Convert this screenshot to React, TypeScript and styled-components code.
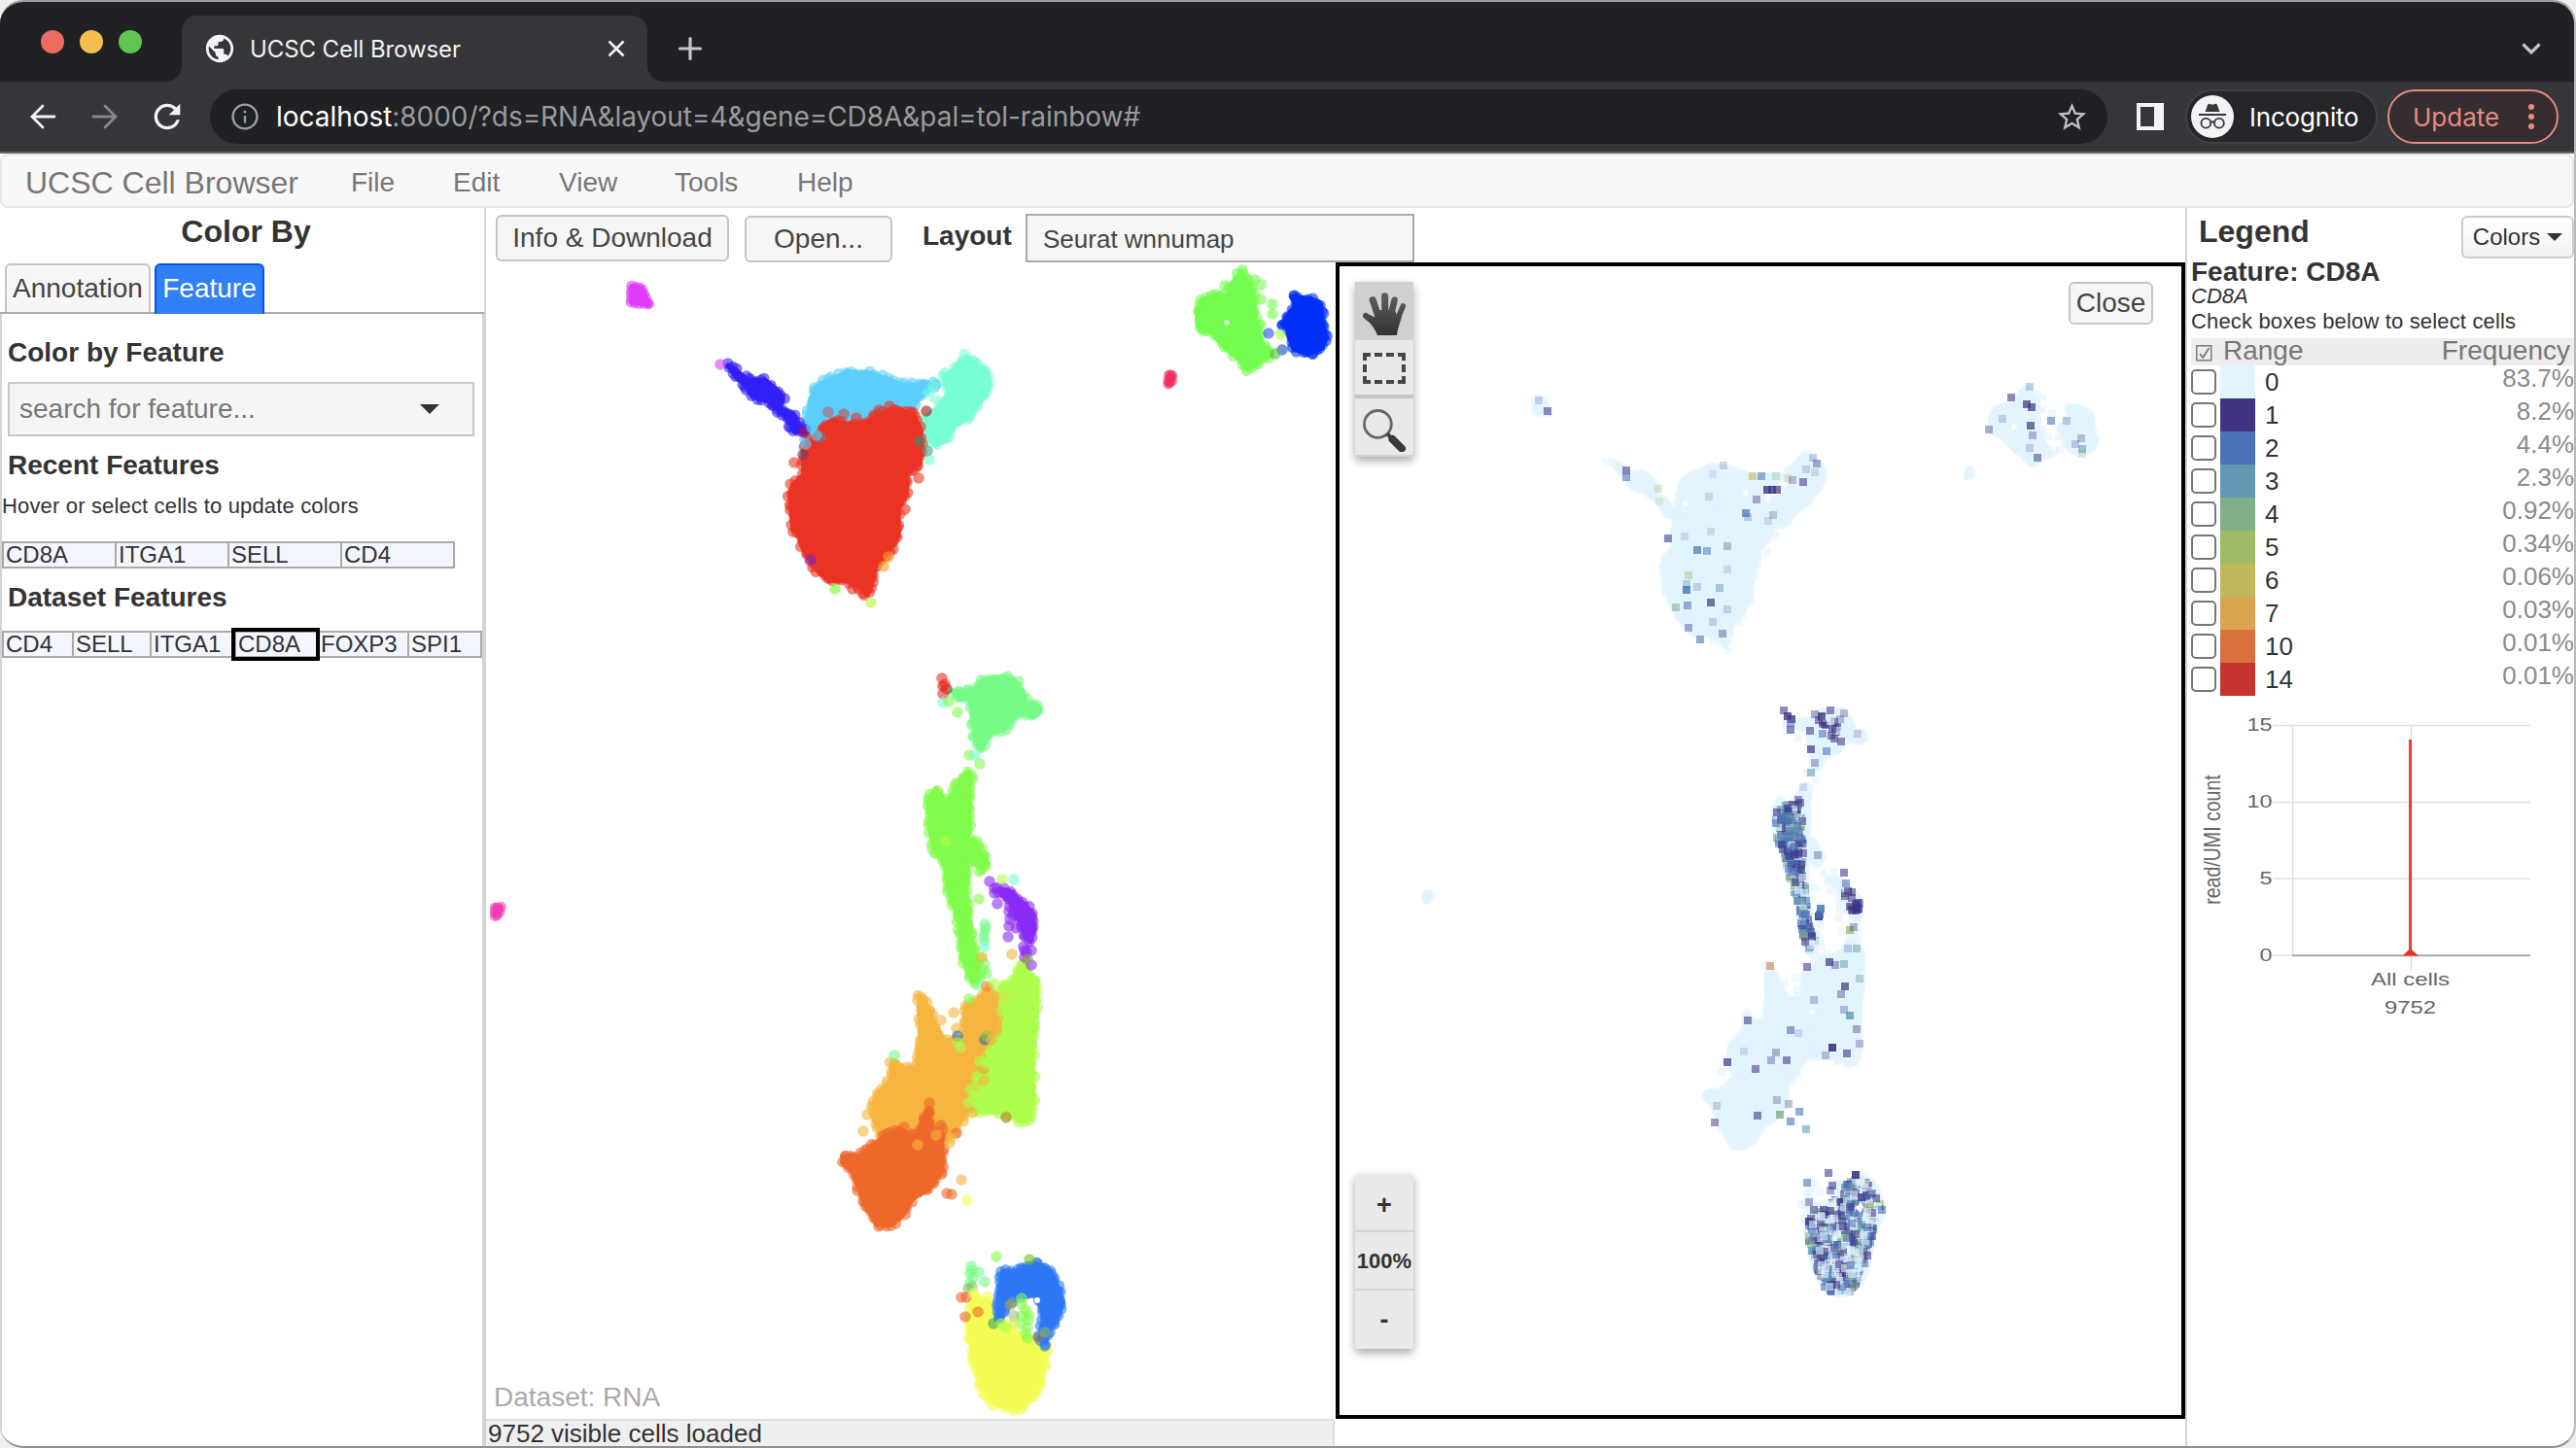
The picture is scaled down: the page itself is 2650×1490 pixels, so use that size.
import React from 'react';
import styled, { createGlobalStyle, css } from 'styled-components';
import { MdPublic, MdRefresh, MdStarBorder } from 'react-icons/md';

const GlobalStyle = createGlobalStyle`
  * { box-sizing: border-box; }
  html, body { margin: 0; padding: 0; background: #efefef; }
  body { font-family: "Liberation Sans", Arial, sans-serif; color: #333; overflow: hidden; }
`;

/* ---------- window chrome ---------- */

const Window = styled.div`
  width: 2650px;
  height: 1490px;
  display: flex;
  flex-direction: column;
  background: #fff;
  border: 2px solid #9b9d9f;
  border-left: 0;
  border-right-color: #b9b9b9;
  border-bottom-color: #8f8f8f;
  border-radius: 24px;
  overflow: hidden;
`;

const uiFont = css`
  font-family: Inter, Roboto, sans-serif;
  white-space: nowrap;
`;

const TabStrip = styled.div`
  height: 82px;
  flex: none;
  display: flex;
  align-items: flex-end;
  background: #202124;
  padding-left: 42px;
`;

const Lights = styled.div`
  display: flex;
  gap: 16px;
  width: 145px;
  align-self: flex-start;
  padding-top: 29px;
`;

const Light = styled.span<{ $color: string }>`
  width: 24px;
  height: 24px;
  border-radius: 50%;
  background: ${(p) => p.$color};
`;

const Tab = styled.div`
  position: relative;
  width: 479px;
  height: 68px;
  border-radius: 16px 16px 0 0;
  background: #35363a;
  display: flex;
  align-items: center;
  padding: 0 23px 0 22px;
  color: #f1f3f4;
  &::before, &::after {
    content: "";
    position: absolute;
    bottom: 0;
    width: 16px;
    height: 16px;
  }
  &::before { left: -16px; background: radial-gradient(circle at 0 0, transparent 15.5px, #35363a 16px); }
  &::after { right: -16px; background: radial-gradient(circle at 100% 0, transparent 15.5px, #35363a 16px); }
`;

const TabTitle = styled.span`
  ${uiFont}
  flex: 1;
  margin-left: 14px;
  font-size: 24px;
  letter-spacing: -0.1px;
`;

const NewTab = styled.div`
  height: 68px;
  display: flex;
  align-items: center;
  margin-left: 31px;
  flex: 1;
`;

const TabMenu = styled.div`
  height: 68px;
  display: flex;
  align-items: center;
  padding-right: 34px;
`;

const Toolbar = styled.div`
  height: 74px;
  flex: none;
  display: flex;
  align-items: center;
  background: #35363a;
  border-bottom: 2px solid #646569;
  padding: 0 16px 0 30px;
`;

const NavIcons = styled.div`
  width: 186px;
  display: flex;
  align-items: center;
  gap: 36px;
  & > :last-child { margin-left: -6px; }
`;

const Omnibox = styled.div`
  width: 1952px;
  height: 56px;
  border-radius: 28px;
  background: #202124;
  display: flex;
  align-items: center;
  padding: 0 19px 0 22px;
`;

const Url = styled.span`
  ${uiFont}
  flex: 1;
  margin-left: 18px;
  font-size: 28px;
  letter-spacing: -0.04px;
  color: #9a9b9e;
  b { font-weight: 400; color: #fff; }
`;

const SidePanelIcon = styled.div`
  width: 28px;
  height: 28px;
  margin-left: 30px;
  border: 4px solid #f1f3f4;
  border-right-width: 10px;
`;

const IncognitoPill = styled.div`
  ${uiFont}
  width: 198px;
  height: 56px;
  margin-left: 22px;
  border: 2px solid #404145;
  border-radius: 28px;
  background: #25252a;
  display: flex;
  align-items: center;
  padding-left: 4px;
  gap: 16px;
  color: #fff;
  font-size: 26px;
  letter-spacing: -0.2px;
`;

const UpdatePill = styled.div`
  ${uiFont}
  width: 176px;
  height: 56px;
  margin-left: 10px;
  border: 2px solid #e58b80;
  border-radius: 28px;
  background: #352d30;
  display: flex;
  align-items: center;
  justify-content: space-between;
  padding: 0 23px 0 24px;
  color: #e58b80;
  font-size: 26px;
  letter-spacing: 0;
`;

/* ---------- page ---------- */

const Menu = styled.nav`
  height: 56px;
  flex: none;
  display: flex;
  background: #f8f8f8;
  border: 2px solid #e7e7e7;
  border-radius: 8px;
  padding-left: 24px;
  color: #777;
  font-size: 28px;
  line-height: 55px;
`;

const Brand = styled.span`
  font-size: 32px;
  width: 335px;
  line-height: 56px;
`;

const MenuItem = styled.span<{ $w: number }>`
  width: ${(p) => p.$w}px;
`;

const Body = styled.div`
  flex: 1;
  display: flex;
  min-height: 0;
`;

const LeftPanel = styled.aside`
  width: 500px;
  flex: none;
  display: flex;
  flex-direction: column;
  border-right: 2px solid #d4d4d4;
`;

const PanelTitle = styled.h2`
  margin: 0;
  font-size: 32px;
  line-height: 48px;
  height: 57px;
  padding-left: 8px;
  text-align: center;
`;

const Tabs = styled.div`
  display: flex;
  gap: 4px;
  height: 52px;
  padding-left: 5px;
  border-bottom: 2px solid #aaa;
`;

const PanelTab = styled.div<{ $active?: boolean }>`
  height: ${(p) => (p.$active ? 52 : 50)}px;
  width: ${(p) => (p.$active ? 113 : 150)}px;
  border: 2px solid ${(p) => (p.$active ? '#0a4dfa' : '#c5c5c5')};
  border-bottom: 0;
  border-radius: 6px 6px 0 0;
  background: ${(p) => (p.$active ? '#3080f8' : '#f6f6f6')};
  color: ${(p) => (p.$active ? '#fff' : '#454545')};
  font-size: 28px;
  line-height: 47px;
  text-align: center;
`;

const TabBody = styled.div`
  flex: 1;
  border-left: 2px solid #d4d4d4;
  border-right: 2px solid #d4d4d4;
  padding-top: 24px;
`;

const SectionTitle = styled.h3<{ $h: number; $top?: number }>`
  margin: 0;
  padding: ${(p) => p.$top ?? 0}px 0 0 6px;
  font-size: 28px;
  line-height: 32px;
  height: ${(p) => p.$h}px;
`;

const SearchBox = styled.div`
  width: 480px;
  height: 56px;
  margin: 0 0 14px 6px;
  padding: 0 34px 0 10px;
  border: 2px solid #c8c8c8;
  background: #f5f5f5;
  display: flex;
  align-items: center;
  justify-content: space-between;
  color: #777;
  font-size: 28px;
  line-height: 52px;
`;

const Caret = styled.span<{ $w: number; $h: number }>`
  border-left: ${(p) => p.$w / 2}px solid transparent;
  border-right: ${(p) => p.$w / 2}px solid transparent;
  border-top: ${(p) => p.$h}px solid #333;
`;

const Hint = styled.p<{ $h: number }>`
  margin: 0;
  font-size: 22px;
  letter-spacing: 0.16px;
  line-height: 26px;
  height: ${(p) => p.$h}px;
  white-space: nowrap;
`;

const GeneTable = styled.div`
  display: flex;
  height: 28px;
  width: max-content;
  border-right: 2px solid #a9a9a9;
`;

const GeneCell = styled.div<{ $w: number; $selected?: boolean }>`
  width: ${(p) => p.$w}px;
  height: 28px;
  padding-left: 2px;
  border: 2px solid #a9a9a9;
  border-right: 0;
  background: #f4f6ff;
  font-size: 24px;
  line-height: 24px;
  white-space: nowrap;
  ${(p) =>
    p.$selected &&
    css`
      position: relative;
      outline: 4px solid #000;
      outline-offset: -1px;
    `}
`;

const Center = styled.main`
  width: 1748px;
  flex: none;
  display: flex;
  flex-direction: column;
`;

const ControlBar = styled.div`
  height: 56px;
  flex: none;
  display: flex;
  align-items: flex-start;
  padding-left: 10px;
`;

const Button = styled.button<{ $w: number; $h?: number; $top?: number; $left?: number }>`
  width: ${(p) => p.$w}px;
  height: ${(p) => p.$h ?? 48}px;
  margin: ${(p) => p.$top ?? 0}px 0 0 ${(p) => p.$left ?? 0}px;
  padding: 0;
  border: 2px solid #c5c5c5;
  border-radius: 6px;
  background: #f6f6f6;
  color: #454545;
  font: 28px/${(p) => (p.$h ?? 48) - 6}px "Liberation Sans", Arial, sans-serif;
  white-space: nowrap;
`;

const LayoutLabel = styled.b`
  font-size: 28px;
  line-height: 32px;
  margin: 13px 0 0 31px;
  width: 106px;
`;

const Select = styled.div`
  width: 400px;
  height: 50px;
  margin-top: 6px;
  padding-left: 16px;
  border: 2px solid #aaa;
  background: #f6f6f6;
  color: #454545;
  font-size: 26px;
  line-height: 48px;
`;

const Plots = styled.div`
  display: flex;
  height: 1190px;
  flex: none;
`;

const PlotLeft = styled.div`
  width: 874px;
  position: relative;
`;

const DatasetTag = styled.div`
  position: absolute;
  left: 8px;
  bottom: 6px;
  font-size: 28px;
  line-height: 32px;
  color: #aaa;
`;

const PlotRight = styled.div`
  width: 874px;
  position: relative;
  border: 4px solid #000;
`;

const FullSvg = styled.svg`
  display: block;
`;

const ToolStack = styled.div<{ $top: number }>`
  position: absolute;
  left: 16px;
  top: ${(p) => p.$top}px;
  width: 60px;
  height: 180px;
  display: flex;
  flex-direction: column;
  background: #e9e9e9;
  box-shadow: 0 4px 10px rgba(0, 0, 0, 0.35);
  border-radius: 2px;
`;

const Tool = styled.div<{ $h: number; $active?: boolean; $line?: string; $drop?: number }>`
  height: ${(p) => p.$h}px;
  padding-top: ${(p) => p.$drop ?? 0}px;
  display: flex;
  align-items: center;
  justify-content: center;
  background: ${(p) => (p.$active ? '#d0d0d0' : 'transparent')};
  border-bottom: ${(p) => p.$line ?? '0'};
  font-weight: bold;
  font-size: 22px;
`;

const Sign = styled.span`
  font-size: 27px;
`;

const ClosePlace = styled.div`
  position: absolute;
  right: 29px;
  top: 16px;
`;

const StatusRow = styled.div`
  flex: 1;
  display: flex;
`;

const Status = styled.div`
  width: 873px;
  background: #efefef;
  border-top: 2px solid #dcdcdc;
  border-right: 2px solid #dcdcdc;
  padding-left: 2px;
  font-size: 26px;
  line-height: 26px;
`;

const Legend = styled.aside`
  flex: 1;
  border-left: 2px solid #d4d4d4;
  padding-left: 4px;
`;

const LegendHead = styled.div`
  display: flex;
  justify-content: space-between;
  height: 58px;
`;

const LegendTitle = styled.h2`
  margin: 0;
  padding-left: 8px;
  font-size: 32px;
  line-height: 48px;
`;

const ColorsButton = styled.div`
  width: 116px;
  height: 44px;
  margin-top: 8px;
  border: 2px solid #ccc;
  border-radius: 6px;
  background: linear-gradient(#fff, #f2f2f2);
  display: flex;
  align-items: center;
  justify-content: center;
  gap: 7px;
  font-size: 24px;
  line-height: 38px;
`;

const FeatureName = styled.h3`
  margin: -8px 0 0;
  font-size: 28px;
  line-height: 32px;
  height: 26px;
`;

const FeatureId = styled.i`
  display: block;
  font-size: 22px;
  line-height: 26px;
  height: 28px;
  padding-top: 2px;
`;

const LegendColumns = styled.div`
  height: 28px;
  display: flex;
  background: #ededed;
  color: #777;
  font-size: 28px;
  line-height: 26px;
  padding: 0 4px 0 5px;
`;

const ColumnName = styled.span<{ $grow?: boolean }>`
  flex: ${(p) => (p.$grow ? 1 : 'none')};
`;

const CheckGlyph = styled.span`
  width: 28px;
  padding-top: 7px;
  display: flex;
`;

const LegendRow = styled.div`
  display: flex;
  height: 34px;
`;

const CheckBox = styled.span`
  width: 26px;
  height: 26px;
  margin: 4px 4px 0 0;
  border: 2px solid #767676;
  border-radius: 5px;
  background: #fff;
`;

const Swatch = styled.span<{ $color: string }>`
  width: 36px;
  background: ${(p) => p.$color};
`;

const RowLabel = styled.span`
  flex: 1;
  margin-left: 10px;
  font-size: 26px;
  line-height: 34px;
`;

const RowFreq = styled.span`
  font-size: 26px;
  line-height: 26px;
  color: #8b8b8b;
`;

/* ---------- scatter data ---------- */

type Pt = [number, number];

const LIME = '#aefd4c';
const MINT = '#78fa88';
const GREEN = '#82fc4c';
const AMBER = '#f5b540';
const RUST = '#ee682c';
const RED = '#ea3324';
const VIOLET = '#8a2bf5';
const BLUE = '#2e78f6';
const YELLOW = '#f4fd55';
const AQUA = '#78fdd6';
const SKY = '#5ccefb';

const clusters: { color: string; path: string; tight?: boolean }[] = [
  { color: '#e03cf8', tight: true, path: '645,293 654,290 664,294 669,304 672,312 669,318 656,317 645,313' },
  { color: '#f0315f', tight: true, path: '1198,384 1205,381 1210,385 1210,394 1204,399 1197,397' },
  { color: '#74fd50', path: '1277,275 1285,283 1294,297 1295,323 1302,350 1312,363 1308,371 1298,374 1293,380 1281,384 1271,373 1256,360 1245,347 1228,338 1227,317 1234,304 1252,299 1262,300 1262,293 1268,283' },
  { color: '#0030f8', path: '1325,303 1336,301 1351,303 1363,312 1365,330 1369,348 1363,362 1345,369 1328,363 1322,350 1320,340 1314,333 1321,322 1328,313' },
  { color: SKY, path: '826,430 829,413 834,397 849,387 872,378 895,379 918,387 932,393 949,389 964,390 966,398 949,413 940,424 903,435 880,445 852,445 834,449 833,461 824,461' },
  { color: '#3220f5', path: '745,373 760,377 771,387 788,386 802,397 810,407 806,417 820,423 825,433 833,443 829,450 814,448 806,433 794,423 788,417 772,413 763,400 751,387' },
  { color: AQUA, path: '996,362 1009,372 1019,380 1023,397 1015,413 998,433 984,443 975,457 961,463 950,453 947,427 966,413 971,403 966,387 978,377 988,365' },
  { color: RED, path: '923,416 943,423 951,440 954,465 949,480 938,490 937,510 929,523 929,553 918,570 904,587 902,600 896,615 889,616 880,607 869,602 851,602 834,587 820,563 817,550 811,547 808,513 811,497 822,487 822,463 831,450 848,432 856,428 872,432 888,431 898,425 908,420' },
  { color: '#ee3cb0', tight: true, path: '505,932 511,929 519,930 519,939 514,946 505,945' },
  { color: MINT, path: '1025,692 1045,694 1056,709 1059,721 1071,722 1075,734 1065,742 1048,738 1037,754 1022,758 1011,776 999,766 997,748 994,722 982,722 977,708 999,706 1008,696' },
  { color: GREEN, path: '995,789 1004,796 1002,814 1002,848 1000,861 1008,863 1021,887 1011,900 1000,886 999,921 1004,963 1010,994 1010,1010 997,1014 985,984 981,947 972,921 967,890 956,874 951,848 950,827 955,814 964,807 975,822 978,809 986,798' },
  { color: VIOLET, path: '1022,914 1040,912 1054,924 1067,938 1069,955 1063,973 1051,968 1045,950 1034,930' },
  { color: LIME, path: '1048,989 1060,994 1071,1010 1071,1047 1067,1088 1068,1130 1063,1154 1048,1159 1040,1149 1014,1149 999,1146 991,1120 1012,1078 1022,1036 1024,1015 1040,1005' },
  { color: AMBER, path: '943,1020 955,1026 965,1049 974,1067 988,1070 988,1036 1002,1026 1017,1013 1028,1026 1031,1057 1014,1083 1004,1105 997,1120 1002,1141 985,1167 968,1177 905,1177 893,1146 896,1125 913,1109 913,1091 922,1088 931,1096 939,1096 942,1067 941,1031' },
  { color: RUST, path: '870,1185 882,1185 902,1169 919,1160 939,1165 951,1141 959,1141 962,1160 974,1170 974,1206 959,1227 942,1237 933,1253 919,1265 899,1264 885,1240 873,1209 862,1198 863,1189' },
  { color: YELLOW, path: '991,1358 999,1332 1020,1336 1031,1355 1048,1370 1068,1376 1082,1388 1077,1418 1068,1439 1051,1453 1040,1455 1017,1447 1005,1428 997,1402' },
  { color: BLUE, path: '1045,1303 1065,1295 1083,1303 1091,1318 1098,1339 1094,1355 1083,1373 1077,1386 1065,1379 1069,1355 1063,1336 1048,1340 1037,1347 1031,1363 1022,1355 1022,1332 1028,1305' },
];

const singles: [number, number, string][] = [
  [1291, 288, '#74fd50'], [1297, 293, '#74fd50'], [1260, 294, '#74fd50'], [1309, 313, '#74fd50'], [1309, 323, '#74fd50'],
  [1305, 343, '#3048f8'], [1317, 344, LIME], [1319, 360, '#1548c8'], [1312, 364, '#50c040'], [1297, 308, '#74fd50'], [1297, 334, '#74fd50'],
  [741, 375, '#d845f0'], [955, 403, AQUA], [956, 473, AQUA], [951, 396, SKY], [960, 397, AQUA], [962, 410, AQUA],
  [817, 476, RED], [945, 492, RED], [931, 524, RED], [877, 606, RED], [826, 468, '#704060'], [844, 450, '#708090'],
  [834, 576, '#8020c0'], [953, 423, '#a01a10'], [946, 454, '#2f8f70'], [827, 445, '#c0104a'], [954, 464, '#50a080'],
  [835, 440, SKY], [840, 448, SKY], [829, 457, SKY], [852, 424, '#b0606c'], [881, 430, RED], [868, 426, '#c05048'], [915, 418, RED], [904, 422, '#d04038'], [936, 424, RED],
  [859, 606, '#7dfd30'], [896, 620, '#b8f83c'], [909, 583, '#f5a020'], [914, 573, '#f5a020'],
  [969, 698, RED], [970, 706, '#e01818'], [974, 709, '#a02018'], [972, 704, RED], [970, 714, RED], [970, 723, AQUA], [976, 722, GREEN], [985, 733, GREEN],
  [997, 777, GREEN], [1003, 777, AQUA], [1008, 786, GREEN], [1007, 897, GREEN], [1007, 925, GREEN], [973, 866, '#b0fc40'],
  [1013, 951, MINT], [1014, 955, MINT], [1013, 959, MINT], [1012, 964, MINT], [1013, 968, MINT], [1013, 974, AQUA], [1013, 992, MINT], [1015, 1002, MINT], [1006, 1014, MINT], [1010, 986, GREEN], [1012, 998, GREEN],
  [1018, 907, VIOLET], [1023, 919, VIOLET], [1026, 930, VIOLET], [1023, 914, VIOLET], [1038, 938, VIOLET], [1039, 946, VIOLET], [1042, 942, VIOLET], [1045, 955, VIOLET], [1038, 953, VIOLET], [1037, 964, VIOLET], [1056, 980, VIOLET], [1054, 978, VIOLET], [1061, 978, VIOLET], [1061, 993, VIOLET], [1054, 985, VIOLET], [1053, 974, VIOLET],
  [1031, 905, LIME], [1043, 905, AQUA], [1041, 982, AMBER], [1057, 987, '#90a040'],
  [920, 1086, MINT], [888, 1164, AMBER], [892, 1147, AMBER], [981, 1042, AMBER], [984, 1058, AMBER], [968, 1050, AMBER], [989, 1214, AMBER], [995, 1235, YELLOW],
  [974, 1228, RUST], [979, 1229, RUST], [984, 1166, RUST], [985, 1066, '#2f70a0'], [1013, 1070, '#2f70a0'], [1015, 1066, '#90c040'], [988, 1078, LIME], [985, 1073, LIME],
  [997, 1028, GREEN], [1015, 1015, '#f08030'], [1010, 985, AMBER], [1005, 1108, LIME], [998, 1121, LIME], [996, 1135, LIME], [1012, 1100, '#f0a040'], [1016, 1095, LIME], [1022, 1012, LIME], [1035, 1149, '#b0d040'], [1035, 1150, '#b09030'],
  [1007, 1128, LIME], [1001, 1131, LIME], [1003, 1118, '#d8d848'], [1008, 1092, LIME], [1028, 1078, LIME], [1020, 1070, '#e8c044'], [1030, 1040, LIME], [1033, 1026, '#d8e048'], [1000, 1145, AMBER], [1012, 1112, AMBER],
  [944, 1178, AMBER], [978, 1171, AMBER], [968, 1158, RUST], [977, 1176, AMBER], [930, 1160, RUST], [926, 1164, RUST], [956, 1135, RUST], [955, 1146, RUST], [970, 1162, RUST], [963, 1168, AMBER],
  [999, 1303, MINT], [1000, 1307, MINT], [998, 1311, MINT], [1001, 1315, MINT], [1007, 1309, MINT], [1013, 1319, MINT], [998, 1320, MINT], [1000, 1324, '#80d070'], [996, 1326, '#80c060'], [1025, 1293, GREEN], [1059, 1296, '#70c020'],
  [989, 1335, RUST], [994, 1335, RUST], [1006, 1350, RUST], [993, 1355, RUST], [1005, 1338, YELLOW], [1016, 1334, YELLOW], [1002, 1331, YELLOW],
  [1040, 1326, BLUE], [1050, 1330, BLUE], [1033, 1350, BLUE], [1042, 1340, '#70a0a0'],
  [1051, 1336, GREEN], [1051, 1342, GREEN], [1055, 1348, GREEN], [1058, 1353, GREEN], [1058, 1358, GREEN], [1051, 1354, GREEN], [1050, 1362, GREEN], [1057, 1366, GREEN], [1057, 1377, GREEN], [1055, 1372, GREEN], [1043, 1354, '#a0c080'], [1043, 1362, '#d0f060'], [1022, 1362, '#30a060'], [1034, 1366, LIME], [1044, 1372, YELLOW], [1039, 1343, '#a0a050'], [1030, 1362, LIME], [1068, 1376, '#808060'], [1075, 1371, '#90b060'], [1075, 1385, BLUE],
];

const mulberry = (seed: number) => () => {
  seed = (seed + 0x6d2b79f5) | 0;
  let t = Math.imul(seed ^ (seed >>> 15), 1 | seed);
  t = (t + Math.imul(t ^ (t >>> 7), 61 | t)) ^ t;
  return ((t ^ (t >>> 14)) >>> 0) / 4294967296;
};

const parse = (s: string): Pt[] => s.split(' ').map((p) => p.split(',').map(Number) as Pt);

const area = (pts: Pt[]) =>
  pts.reduce((sum, [x, y], i) => {
    const [nx, ny] = pts[(i + 1) % pts.length];
    return sum + (x * ny - nx * y);
  }, 0) / 2;

/* Pulls the outline inwards so the dots drawn on it end at the cluster's edge. */
const inset = (pts: Pt[], d: number): Pt[] => {
  const sign = area(pts) > 0 ? 1 : -1;
  return pts.map(([x, y], i) => {
    const a = pts[(i + pts.length - 1) % pts.length];
    const b = pts[(i + 1) % pts.length];
    const dx = b[0] - a[0];
    const dy = b[1] - a[1];
    const len = Math.hypot(dx, dy) || 1;
    return [x - (sign * dy * d) / len, y + (sign * dx * d) / len];
  });
};

const edgeDots = (pts: Pt[], seed: number, jitter: number): Pt[] => {
  const rnd = mulberry(seed);
  const dots: Pt[] = [];
  pts.forEach(([x, y], i) => {
    const [nx, ny] = pts[(i + 1) % pts.length];
    const n = Math.max(1, Math.round(Math.hypot(nx - x, ny - y) / 4.5));
    for (let k = 0; k < n; k++) {
      const t = k / n;
      dots.push([x + (nx - x) * t + (rnd() - 0.5) * jitter, y + (ny - y) * t + (rnd() - 0.5) * jitter]);
    }
  });
  return dots;
};

const Cluster = ({ path, color, seed, tight }: { path: string; color: string; seed: number; tight?: boolean }) => {
  const core = inset(parse(path), 5);
  return (
    <g fill={color}>
      <polygon points={core.map((p) => p.join(',')).join(' ')} stroke={color} strokeWidth={5} strokeLinejoin="round" />
      {edgeDots(core, seed, tight ? 1 : 5).map(([x, y], i) => (
        <circle key={i} cx={x} cy={y} r={5.6} opacity={0.6} />
      ))}
    </g>
  );
};

const AnnotationPlot = () => (
  <FullSvg width="874" height="1190" viewBox="500 270 874 1190">
    {clusters.map((c, i) => (
      <Cluster key={i} {...c} seed={i + 1} />
    ))}
    {singles.map(([x, y, color], i) => (
      <circle key={i} cx={x} cy={y} r={5.8} fill={color} opacity={0.6} />
    ))}
    <g fill="#fff">
      <circle cx="1262" cy="332" r="2.5" />
      <circle cx="1067" cy="1338" r="3" />
      <circle cx="963" cy="406" r="2" />
    </g>
  </FullSvg>
);

const legend: [string, string, string][] = [
  ['0', '#e2f4fe', '83.7%'],
  ['1', '#403482', '8.2%'],
  ['2', '#4a70b5', '4.4%'],
  ['3', '#6299b2', '2.3%'],
  ['4', '#80af89', '0.92%'],
  ['5', '#a0ba67', '0.34%'],
  ['6', '#c0b75a', '0.06%'],
  ['7', '#d9a450', '0.03%'],
  ['10', '#d9703d', '0.01%'],
  ['14', '#c6352d', '0.01%'],
];

/* x, y, legend index, strength */
const cells: [number, number, number, number?][] = [
  [1592, 423, 1], [1583, 412, 1, 0.2], [1673, 484, 1], [1673, 491, 2], [1706, 503, 5, 0.3], [1707, 516, 5, 0.2],
  [1865, 471, 3, 0.4], [1869, 477, 1, 0.4], [1855, 496, 1], [1803, 490, 6], [1812, 490, 2], [1827, 490, 4, 0.3], [1839, 492, 5, 0.3],
  [1818, 504, 1, 0.8], [1823, 504, 1, 0.8], [1828, 504, 1, 0.7], [1807, 514, 1, 0.4], [1796, 528, 2, 0.7], [1798, 532, 2, 0.3],
  [1716, 554, 1], [1746, 566, 2, 0.7], [1756, 567, 2, 0.5], [1777, 562, 1, 0.3], [1733, 552, 1, 0.15], [1737, 592, 5, 0.4],
  [1735, 601, 3, 0.4], [1735, 607, 2, 0.8], [1746, 604, 1, 0.2], [1736, 623, 2], [1724, 625, 4], [1769, 605, 3, 0.5], [1760, 620, 1, 0.7], [1777, 586, 1, 0.15],
  [1749, 658, 2], [1737, 646, 1, 0.4], [1772, 652, 1, 0.4], [1762, 640, 1, 0.2], [1777, 627, 1, 0.2], [1773, 479, 1, 0.2], [1758, 511, 1, 0.15], [1762, 488, 1, 0.1], [1824, 530, 1, 0.25], [1819, 536, 1, 0.15], [1760, 547, 1, 0.15], [1858, 483, 1, 0.2], [1867, 486, 1, 0.15], [1844, 494, 1, 0.3],
  [2069, 409, 1], [2085, 416, 1, 0.7], [2090, 419, 1, 0.7], [2088, 398, 3, 0.4], [2089, 438, 1, 0.7], [2091, 448, 1, 0.35], [2110, 433, 2], [2060, 431, 1, 0.2], [2126, 433, 1, 0.25],
  [2046, 442, 1, 0.4], [2096, 471, 1, 0.5], [2141, 451, 1, 0.3], [2135, 457, 1, 0.25], [2142, 462, 3, 0.6], [2142, 467, 5, 0.3], [2088, 461, 1, 0.2],
  [1835, 731, 1], [1839, 737, 1, 0.8], [1843, 740, 1, 0.8], [1842, 744, 2], [1842, 751, 1], [1883, 731, 1], [1874, 737, 1, 0.7], [1867, 735, 1, 0.4], [1862, 752, 1], [1885, 750, 1, 0.6], [1884, 757, 1],
  [1875, 745, 1, 0.4], [1894, 763, 1], [1893, 740, 1, 0.3], [1863, 771, 1, 0.7], [1879, 773, 2], [1867, 785, 1, 0.35], [1863, 795, 3], [1911, 755, 1, 0.2], [1855, 810, 1, 0.15], [1850, 823, 1, 0.5], [1897, 734, 1, 0.3],
  [1870, 880, 1, 0.35], [1897, 898, 1], [1899, 909, 2], [1873, 935, 2, 0.8], [1871, 943, 1, 0.9], [1872, 941, 2, 0.8], [1903, 957, 5, 0.8], [1907, 954, 1, 0.35], [1859, 995, 1], [1882, 990, 1, 0.7], [1888, 993, 1, 0.4], [1897, 992, 3, 0.5],
  [1901, 976, 3, 0.4], [1910, 976, 3, 0.5], [1821, 994, 8], [1898, 1015, 1, 0.7], [1894, 1023, 1, 0.4], [1913, 1007, 3, 0.4], [1866, 1029, 1, 0.3], [1903, 1045, 3, 0.8], [1897, 1039, 2, 0.4], [1798, 1050, 1], [1842, 1060, 2, 0.6], [1850, 1063, 1, 0.15],
  [1910, 1059, 1, 0.4], [1885, 1078, 1, 0.9], [1878, 1086, 1, 0.3], [1900, 1084, 1, 0.6], [1913, 1074, 1, 0.3], [1777, 1093, 1, 0.7], [1827, 1083, 1, 0.35], [1822, 1091, 1, 0.35], [1838, 1091, 1], [1806, 1100, 1], [1794, 1082, 1, 0.15], [1828, 1132, 1, 0.3],
  [1840, 1136, 1, 0.3], [1831, 1147, 4, 0.8], [1851, 1144, 2], [1842, 1154, 2], [1858, 1162, 3], [1808, 1148, 1, 0.6], [1764, 1155, 1, 0.5], [1766, 1138, 1, 0.2], [1881, 1207, 1], [1909, 1209, 1, 0.9], [1859, 1217, 2], [1885, 1220, 1], [1883, 1225, 1, 0.4], [1866, 1245, 1], [1861, 1237, 1, 0.4],
];

const dense: { path: string; count: number; weights: number[] }[] = [
  { path: '1826,832 1836,826 1853,826 1855,858 1856,894 1860,925 1863,955 1868,972 1860,980 1853,960 1849,930 1841,904 1835,880 1828,863', count: 330, weights: [0.3, 0.24, 0.28, 0.12, 0.04, 0.02] },
  { path: '1827,845 1840,835 1852,850 1850,880 1838,884 1828,865', count: 60, weights: [0.05, 0.2, 0.5, 0.22, 0.03] },
  { path: '1896,917 1904,915 1914,930 1911,942 1904,937', count: 24, weights: [0.25, 0.55, 0.15, 0.05] },
  { path: '1858,1258 1877,1243 1895,1230 1902,1212 1922,1217 1931,1231 1936,1246 1928,1267 1922,1287 1916,1314 1903,1330 1889,1333 1876,1325 1868,1302 1861,1277', count: 760, weights: [0.42, 0.27, 0.19, 0.08, 0.03, 0.01] },
  { path: '1868,735 1894,735 1898,750 1886,763 1868,755', count: 22, weights: [0.75, 0.22, 0.03] },
];

const inside = (x: number, y: number, pts: Pt[]) => {
  let hit = false;
  for (let i = 0, j = pts.length - 1; i < pts.length; j = i++) {
    const [xi, yi] = pts[i];
    const [xj, yj] = pts[j];
    if (yi > y !== yj > y && x < ((xj - xi) * (y - yi)) / (yj - yi) + xi) hit = !hit;
  }
  return hit;
};

const scatter = (path: string, count: number, weights: number[], seed: number) => {
  const pts = parse(path);
  const rnd = mulberry(seed);
  const xs = pts.map((p) => p[0]);
  const ys = pts.map((p) => p[1]);
  const x0 = Math.min(...xs);
  const x1 = Math.max(...xs);
  const y0 = Math.min(...ys);
  const y1 = Math.max(...ys);
  const out: [number, number, number][] = [];
  while (out.length < count) {
    const x = x0 + rnd() * (x1 - x0);
    const y = y0 + rnd() * (y1 - y0);
    if (!inside(x, y, pts)) continue;
    let r = rnd();
    let level = 0;
    while (level < weights.length - 1 && r > weights[level]) r -= weights[level++];
    out.push([Math.round(x), Math.round(y), level]);
  }
  return out;
};

const Cell = ({ x, y, level, strength = 0.56 }: { x: number; y: number; level: number; strength?: number }) => (
  <rect x={x - 4} y={y - 4} width={8} height={8} fill={legend[level][1]} opacity={strength} />
);

const ExpressionPlot = () => (
  <FullSvg width="866" height="1182" viewBox="1378 274 866 1182">
    <g transform="translate(1056.2 175.8) scale(0.8056 0.7967)">
      {clusters.map((c, i) => (
        <Cluster key={i} path={c.path} color={legend[0][1]} seed={i + 40} tight />
      ))}
      {singles.map(([x, y], i) => (
        <rect key={i} x={x - 5} y={y - 5} width={10} height={10} fill={legend[0][1]} opacity={0.6} />
      ))}
    </g>
    <g fill="#fff">
      <circle cx="1734" cy="518" r="3" />
      <circle cx="1796" cy="507" r="3" />
      <circle cx="2072" cy="439" r="3" />
      <circle cx="1864" cy="1041" r="2.5" />
      <circle cx="1841" cy="1017" r="3" />
    </g>
    {dense.map((d, k) => (
      <g key={k}>
        {scatter(d.path, d.count, d.weights, 90 + k).map(([x, y, level], i) => (
          <Cell key={i} x={x} y={y} level={level} />
        ))}
      </g>
    ))}
    {cells.map(([x, y, level, strength], i) => (
      <Cell key={i} x={x} y={y} level={level} strength={strength} />
    ))}
    <path d="M1909 1243L1914 1237L1917 1242L1914 1248Z" fill="#fff" />
  </FullSvg>
);

/* ---------- icons ---------- */

const HandIcon = () => (
  <svg width="44" height="44" viewBox="0 0 44 44">
    <defs>
      <linearGradient id="ink" x1="0" y1="0" x2="0" y2="44" gradientUnits="userSpaceOnUse">
        <stop offset="0" stopColor="#606060" />
        <stop offset="1" stopColor="#333" />
      </linearGradient>
    </defs>
    <g stroke="url(#ink)" strokeLinecap="round" fill="none">
      <path d="M10.2 7.6L16 25" strokeWidth="7" />
      <path d="M22.6 3.8L23 25" strokeWidth="7" />
      <path d="M32.6 7.8L28.5 25" strokeWidth="6.6" />
      <path d="M41.3 14L34 31" strokeWidth="5.6" />
      <path d="M3 24L13 32" strokeWidth="6" />
    </g>
    <path fill="url(#ink)" d="M4 21.5L13.5 26L13 18H33L36 26L38.5 21.5L40 25C38.5 30 35.5 38 35 44H15C12 36 7 30 2 27Z" />
  </svg>
);

const MarqueeIcon = () => (
  <svg width="44" height="34" viewBox="0 0 44 34" fill="none" stroke="#474747" strokeWidth="4">
    <path d="M8 3H2V9M12 3H20M24 3H32M36 3H42V9M2 13V21M42 13V21M2 25V31H8M12 31H20M24 31H32M36 31H42V25" />
  </svg>
);

const MagnifierIcon = () => (
  <svg width="44" height="44" viewBox="0 0 44 44" fill="none">
    <circle cx="15.4" cy="15.4" r="13.9" stroke="#666" strokeWidth="2.8" />
    <path d="M25 25.5L31 31" stroke="#444" strokeWidth="4" />
    <path d="M30.5 31L40 40.5" stroke="#3a3a3a" strokeWidth="8" strokeLinecap="round" />
  </svg>
);

const IncognitoIcon = () => (
  <svg width="44" height="44" viewBox="0 0 44 44">
    <circle cx="22" cy="22" r="22" fill="#f1f3f4" />
    <path d="M14.5 17L17.3 9.5C17.8 8.6 18.6 8.6 19.4 9C21 9.7 23 9.7 24.6 9C25.4 8.6 26.2 8.6 26.7 9.5L29.5 17Z" fill="#35363a" />
    <path d="M8 20H36" stroke="#35363a" strokeWidth="2" />
    <g fill="none" stroke="#35363a" strokeWidth="1.8">
      <circle cx="15.3" cy="28.7" r="4.9" />
      <circle cx="28.9" cy="28.7" r="4.9" />
      <path d="M20 28.2C21.4 27 22.8 27 24.2 28.2" />
    </g>
  </svg>
);

const Arrow = ({ color, flip }: { color: string; flip?: boolean }) => (
  <svg width="28" height="28" viewBox="0 0 28 28" fill="none" stroke={color} strokeWidth="2.8" strokeLinecap="round">
    <path d={flip ? 'M2 14H25M14 3L25 14L14 25' : 'M26 14H3M14 3L3 14L14 25'} />
  </svg>
);

const InfoIcon = () => (
  <svg width="28" height="28" viewBox="0 0 28 28" fill="none" stroke="#9aa0a6" strokeWidth="2.4">
    <circle cx="14" cy="14" r="12.4" />
    <path d="M14 13V20.5M14 7.8V10.4" />
  </svg>
);

const Dots = () => (
  <svg width="6" height="28" viewBox="0 0 6 28" fill="#e58b80">
    <circle cx="3" cy="4" r="3" />
    <circle cx="3" cy="14" r="3" />
    <circle cx="3" cy="24" r="3" />
  </svg>
);

const CheckIcon = () => (
  <svg width="17" height="17" viewBox="0 0 17 17" fill="none" stroke="#777">
    <rect x="0.8" y="0.8" width="15" height="15" strokeWidth="1.4" />
    <path d="M4 9L7.2 13L13.5 3" strokeWidth="1.7" />
  </svg>
);

const ViolinChart = () => (
  <FullSvg width="394" height="340" viewBox="2254 716 394 340" fill="#666" fontFamily='"Liberation Sans", Arial, sans-serif'>
    <path d="M2338 746.5H2603M2338 825.5H2603M2338 904.2H2603M2338 983H2359M2358.5 746V983M2480.5 746V1000" stroke="#e0e0e0" strokeWidth="1.6" />
    <path d="M2358 983.2H2603" stroke="#a6a6a6" strokeWidth="2" />
    <path d="M2471.5 983.5L2479.5 976L2488 983.5Z" fill="#ea3324" />
    <path d="M2479.5 761V983" stroke="#ea3324" strokeWidth="2.8" />
    <g fontSize="18">
      <text transform="translate(2337.5 752) scale(1.3 1)" textAnchor="end">15</text>
      <text transform="translate(2337.5 830.5) scale(1.3 1)" textAnchor="end">10</text>
      <text transform="translate(2337.5 909.5) scale(1.3 1)" textAnchor="end">5</text>
      <text transform="translate(2337.5 988.5) scale(1.3 1)" textAnchor="end">0</text>
      <text transform="translate(2479.5 1014) scale(1.33 1)" textAnchor="middle">All cells</text>
      <text transform="translate(2479.5 1042.5) scale(1.33 1)" textAnchor="middle">9752</text>
    </g>
    <text transform="translate(2284 864) rotate(-90) scale(0.85 1)" textAnchor="middle" fontSize="23">read/UMI count</text>
  </FullSvg>
);

const recent = ['CD8A', 'ITGA1', 'SELL', 'CD4'];
const dataset: [string, number][] = [['CD4', 72], ['SELL', 80], ['ITGA1', 87], ['CD8A', 85], ['FOXP3', 93], ['SPI1', 75]];

export default function App() {
  return (
    <>
      <GlobalStyle />
      <Window>
        <TabStrip>
          <Lights>
            <Light $color="#ed6a5e" />
            <Light $color="#f5bf4f" />
            <Light $color="#61c554" />
          </Lights>
          <Tab>
            <MdPublic size={34} />
            <TabTitle>UCSC Cell Browser</TabTitle>
            <svg width="18" height="18" viewBox="0 0 18 18" stroke="#f1f3f4" strokeWidth="2.6">
              <path d="M1.5 1.5L16.5 16.5M16.5 1.5L1.5 16.5" />
            </svg>
          </Tab>
          <NewTab>
            <svg width="26" height="26" viewBox="0 0 26 26" stroke="#c4c6c9" strokeWidth="3.2" strokeLinecap="round">
              <path d="M13 2.5V23.5M2.5 13H23.5" />
            </svg>
          </NewTab>
          <TabMenu>
            <svg width="20" height="14" viewBox="0 0 20 14" fill="none" stroke="#c4c6c9" strokeWidth="3.2">
              <path d="M1.5 2.5L10 11L18.5 2.5" />
            </svg>
          </TabMenu>
        </TabStrip>
        <Toolbar>
          <NavIcons>
            <Arrow color="#f1f3f4" />
            <Arrow color="#85878a" flip />
            <MdRefresh size={40} color="#f1f3f4" />
          </NavIcons>
          <Omnibox>
            <InfoIcon />
            <Url>
              <b>localhost</b>:8000/?ds=RNA&amp;layout=4&amp;gene=CD8A&amp;pal=tol-rainbow#
            </Url>
            <MdStarBorder size={35} color="#c0c1c2" />
          </Omnibox>
          <SidePanelIcon />
          <IncognitoPill>
            <IncognitoIcon />
            Incognito
          </IncognitoPill>
          <UpdatePill>
            Update
            <Dots />
          </UpdatePill>
        </Toolbar>
        <Menu>
          <Brand>UCSC Cell Browser</Brand>
          <MenuItem $w={105}>File</MenuItem>
          <MenuItem $w={109}>Edit</MenuItem>
          <MenuItem $w={119}>View</MenuItem>
          <MenuItem $w={126}>Tools</MenuItem>
          <MenuItem $w={80}>Help</MenuItem>
        </Menu>
        <Body>
          <LeftPanel>
            <PanelTitle>Color By</PanelTitle>
            <Tabs>
              <PanelTab>Annotation</PanelTab>
              <PanelTab $active>Feature</PanelTab>
            </Tabs>
            <TabBody>
              <SectionTitle $h={46}>Color by Feature</SectionTitle>
              <SearchBox>
                search for feature...
                <Caret $w={20} $h={10} />
              </SearchBox>
              <SectionTitle $h={45}>Recent Features</SectionTitle>
              <Hint $h={49}>Hover or select cells to update colors</Hint>
              <GeneTable>
                {recent.map((g) => (
                  <GeneCell key={g} $w={116}>{g}</GeneCell>
                ))}
              </GeneTable>
              <SectionTitle $h={64} $top={14}>Dataset Features</SectionTitle>
              <GeneTable>
                {dataset.map(([g, w]) => (
                  <GeneCell key={g} $w={w} $selected={g === 'CD8A'}>{g}</GeneCell>
                ))}
              </GeneTable>
            </TabBody>
          </LeftPanel>
          <Center>
            <ControlBar>
              <Button $w={240} $top={7}>Info &amp; Download</Button>
              <Button $w={152} $top={8} $left={16}>Open...</Button>
              <LayoutLabel>Layout</LayoutLabel>
              <Select>Seurat wnnumap</Select>
            </ControlBar>
            <Plots>
              <PlotLeft>
                <AnnotationPlot />
                <DatasetTag>Dataset: RNA</DatasetTag>
              </PlotLeft>
              <PlotRight>
                <ExpressionPlot />
                <ToolStack $top={16}>
                  <Tool $h={60} $drop={6} $active><HandIcon /></Tool>
                  <Tool $h={60} $drop={2} $line="4px solid #c5c5c5"><MarqueeIcon /></Tool>
                  <Tool $h={60} $drop={8} $line="2px solid #d4d4d4"><MagnifierIcon /></Tool>
                </ToolStack>
                <ToolStack $top={934}>
                  <Tool $h={60} $drop={6} $line="2px solid #d4d4d4"><Sign>+</Sign></Tool>
                  <Tool $h={60} $drop={2} $line="2px solid #d4d4d4">100%</Tool>
                  <Tool $h={60} $drop={1}><Sign>-</Sign></Tool>
                </ToolStack>
                <ClosePlace>
                  <Button $w={87} $h={44}>Close</Button>
                </ClosePlace>
              </PlotRight>
            </Plots>
            <StatusRow>
              <Status>9752 visible cells loaded</Status>
            </StatusRow>
          </Center>
          <Legend>
            <LegendHead>
              <LegendTitle>Legend</LegendTitle>
              <ColorsButton>
                Colors
                <Caret $w={16} $h={8} />
              </ColorsButton>
            </LegendHead>
            <FeatureName>Feature: CD8A</FeatureName>
            <FeatureId>CD8A</FeatureId>
            <Hint $h={30}>Check boxes below to select cells</Hint>
            <LegendColumns>
              <CheckGlyph><CheckIcon /></CheckGlyph>
              <ColumnName $grow>Range</ColumnName>
              <ColumnName>Frequency</ColumnName>
            </LegendColumns>
            {legend.map(([label, color, freq]) => (
              <LegendRow key={label}>
                <CheckBox />
                <Swatch $color={color} />
                <RowLabel>{label}</RowLabel>
                <RowFreq>{freq}</RowFreq>
              </LegendRow>
            ))}
            <ViolinChart />
          </Legend>
        </Body>
      </Window>
    </>
  );
}
